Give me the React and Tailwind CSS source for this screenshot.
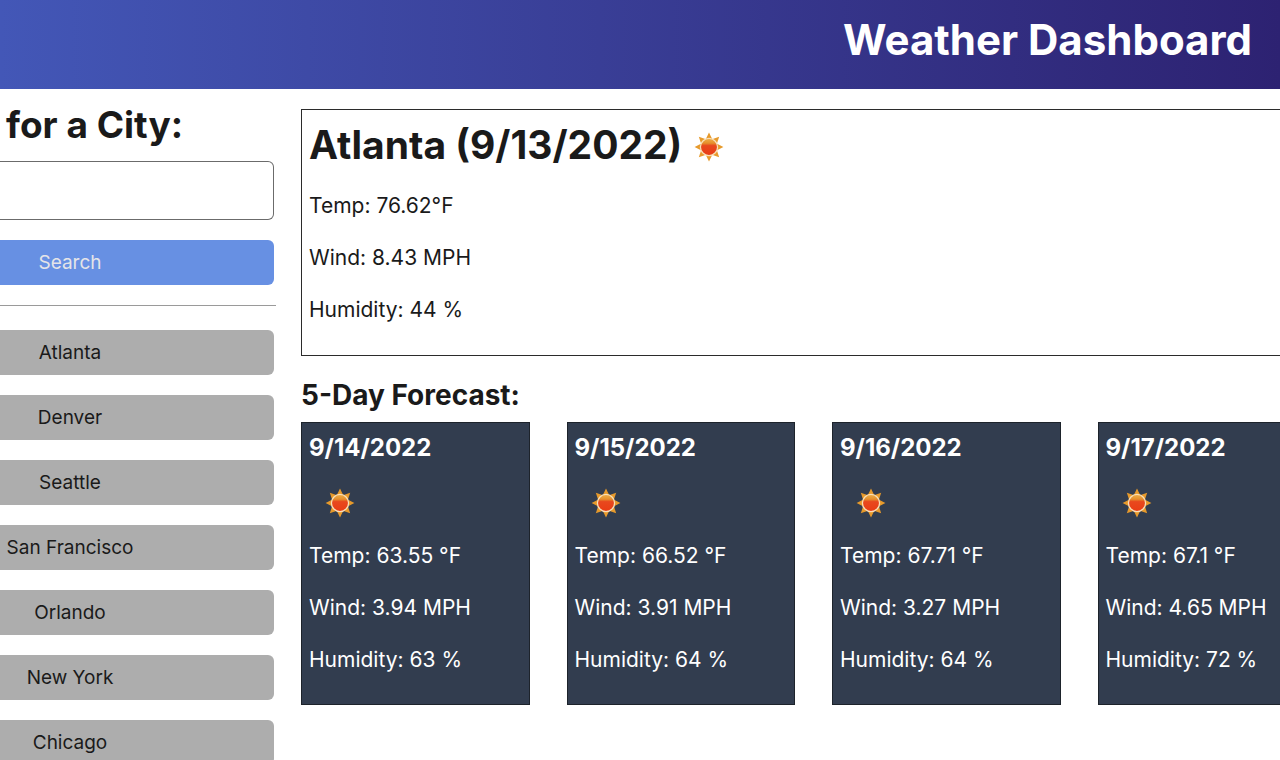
const cities = ["Atlanta", "Denver", "Seattle", "San Francisco", "Orlando", "New York", "Chicago"];

const forecast = [
  { date: "9/14/2022", temp: "63.55", wind: "3.94", humidity: "63" },
  { date: "9/15/2022", temp: "66.52", wind: "3.91", humidity: "64" },
  { date: "9/16/2022", temp: "67.71", wind: "3.27", humidity: "64" },
  { date: "9/17/2022", temp: "67.1", wind: "4.65", humidity: "72" },
];

const rays = [0, 45, 90, 135, 180, 225, 270, 315];

function Sun({ className }) {
  return (
    <svg viewBox="0 0 30 30" className={className} role="img" aria-label="Sunny">
      <defs>
        <linearGradient id="sun-disc" x1="0" y1="0" x2="0" y2="1">
          <stop offset="0" stopColor="#efb04a" />
          <stop offset="0.28" stopColor="#e58f2c" />
          <stop offset="0.42" stopColor="#e8481e" />
          <stop offset="1" stopColor="#e93c14" />
        </linearGradient>
      </defs>
      {rays.map((angle) => (
        <path
          key={angle}
          d="M15 0.6 L18.4 7.4 H11.6 Z"
          fill="#e79a2b"
          transform={`rotate(${angle} 15 15)`}
        />
      ))}
      <circle cx="15" cy="15" r="8.6" fill="url(#sun-disc)" stroke="#f8dfb8" strokeWidth="1.3" />
    </svg>
  );
}

function Readings({ temp, wind, humidity }) {
  return (
    <>
      <p>Temp: {temp}</p>
      <p>Wind: {wind} MPH</p>
      <p>Humidity: {humidity} %</p>
    </>
  );
}

export default function App() {
  return (
    <div className="min-h-screen overflow-hidden bg-white font-['Inter',sans-serif] text-[#1a1a1a]">
      <header className="flex h-[89px] items-start justify-end bg-linear-to-r from-[#4357b7] to-[#2d2272] px-7 pt-3">
        <h1 className="text-[42px] leading-14 font-bold text-white">Weather Dashboard</h1>
      </header>

      <div className="flex">
        <aside className="w-[276px] shrink-0 pt-3">
          <form onSubmit={(event) => event.preventDefault()}>
            <h2 className="pl-1.5 text-[37px] leading-12 font-bold">
              <label htmlFor="city">for a City:</label>
            </h2>
            <div className="pt-3 pr-0.5">
              <input
                id="city"
                type="text"
                className="block h-[59px] w-full rounded-r-md border border-l-0 border-[#6b6b6b] px-3 text-[19px] outline-none"
              />
              <button
                type="submit"
                className="mt-5 block h-[45px] w-full rounded-r-md bg-[#6790e3] pt-0.5 pr-[134px] text-center text-[19px] whitespace-nowrap text-[#e4e4e8]"
              >
                Search
              </button>
            </div>
          </form>
          <hr className="mt-5 mb-6 border-[#9a9a9a]" />
          <div className="flex flex-col gap-5 pr-0.5">
            {cities.map((city) => (
              <button
                key={city}
                type="button"
                className="h-[45px] w-full rounded-r-md bg-[#adadad] pt-0.5 pr-[134px] text-center text-[19px] whitespace-nowrap text-[#1a1a1a]"
              >
                {city}
              </button>
            ))}
          </div>
        </aside>

        <main className="min-w-0 flex-1 pt-5 pl-[25px]">
          <section className="flex h-[247px] flex-col gap-6 border border-r-0 border-[#2b2b2b] px-[7px] pt-3 text-[21px] leading-7">
            <h2 className="flex items-center gap-3 text-[39px] leading-[46px] font-bold">
              Atlanta (9/13/2022)
              <Sun className="mt-1 size-[30px]" />
            </h2>
            <Readings temp="76.62°F" wind="8.43" humidity="44" />
          </section>

          <h3 className="mt-5 text-[28px] leading-[38px] font-bold">5-Day Forecast:</h3>
          <div className="mt-2 -mr-[46px] grid grid-cols-4 gap-[37px]">
            {forecast.map((day) => (
              <article
                key={day.date}
                className="flex h-[283px] flex-col gap-6 border border-[#1d232b] bg-[#323d4f] px-[7px] pt-[9px] text-[21px] leading-7 text-white"
              >
                <h4 className="text-[24px] leading-8 font-bold">{day.date}</h4>
                <Sun className="ml-4 size-[30px]" />
                <Readings temp={`${day.temp} °F`} wind={day.wind} humidity={day.humidity} />
              </article>
            ))}
          </div>
        </main>
      </div>
    </div>
  );
}
